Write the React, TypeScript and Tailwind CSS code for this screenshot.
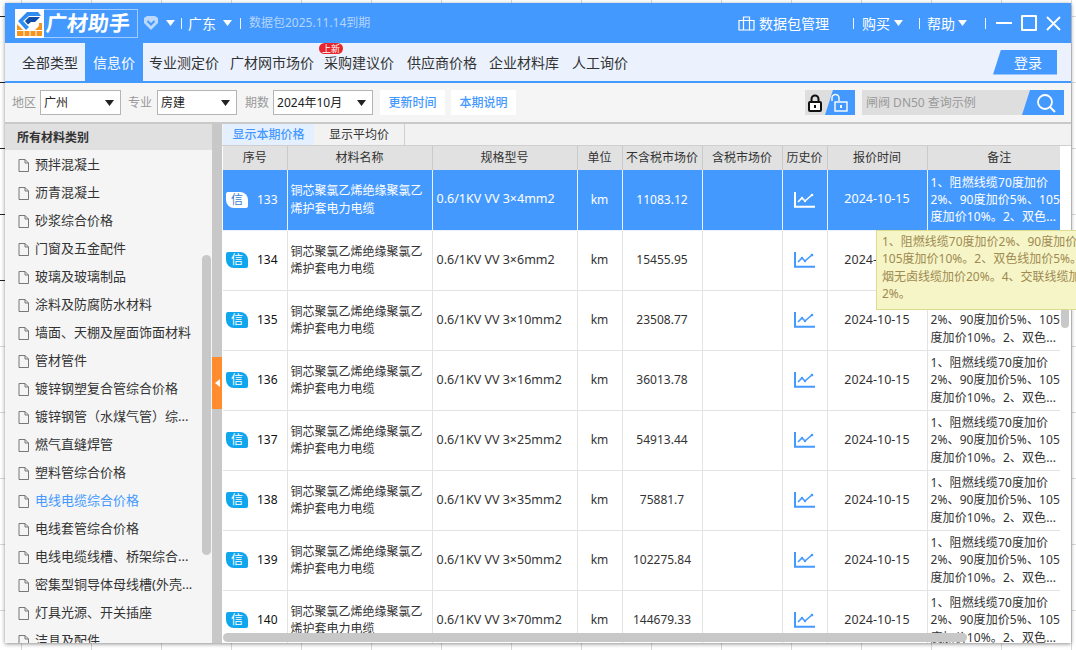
import React from "react";

const FONT = "[font-family:'Noto_Sans','Noto_Sans_CJK_SC',sans-serif]";

function Caret({ className = "text-white" }: { className?: string }) {
  return (
    <svg width="9" height="6" viewBox="0 0 9 6" className={className}>
      <path d="M0 0H9L4.5 6Z" fill="currentColor" />
    </svg>
  );
}

function Sep() {
  return <span className="block w-px h-[11px] bg-white/90" />;
}

function Logo() {
  return (
    <svg width="29" height="29" viewBox="0 0 29 29" className="bg-white shrink-0">
      <path d="M12 3H23L26 7H14L8 12L14 18L11 21L3 12Z" fill="#2f8df0" />
      <path d="M14 8H25L20 13H16L13 15.5L10 12Z" fill="#0f4fa8" />
      <path d="M2 15L9 22H19L24 17V14H27V27H2Z" fill="#f7941d" />
      <path d="M2 21.5H9M19 21.5H27M9 22V27M15 22V27M21 22V27" stroke="#fff" strokeWidth="1" />
    </svg>
  );
}

function Select({ value, w }: { value: string; w: string }) {
  return (
    <div className={`${w} shrink-0 h-[25px] bg-white border border-[#b5b5b5] flex items-center justify-between pl-[3px] pr-[6px] text-[12px] text-[#222]`}>
      <span>{value}</span>
      <Caret className="text-[#222]" />
    </div>
  );
}

function ChartIcon({ className }: { className: string }) {
  return (
    <svg width="21" height="16" viewBox="0 0 21 16" className={`${className} mx-auto block`}>
      <path d="M1 0V14.8H21" fill="none" stroke="currentColor" strokeWidth="2" />
      <path d="M4 10L8 6L11 9L15 5.5L18 3" fill="none" stroke="currentColor" strokeWidth="1.6" />
      <circle cx="8" cy="6" r="1.2" fill="currentColor" />
      <circle cx="11" cy="9" r="1.2" fill="currentColor" />
      <circle cx="18" cy="3" r="1.3" fill="currentColor" />
    </svg>
  );
}

function FileIcon() {
  return (
    <svg width="11" height="13" viewBox="0 0 11 13" className="shrink-0 text-[#777]">
      <path d="M1 .5H7L10.5 4V12.5H1Z M7 .5V4H10.5" fill="none" stroke="currentColor" strokeWidth="1" />
    </svg>
  );
}

const categories = [
  "预拌混凝土", "沥青混凝土", "砂浆综合价格", "门窗及五金配件", "玻璃及玻璃制品", "涂料及防腐防水材料",
  "墙面、天棚及屋面饰面材料", "管材管件", "镀锌钢塑复合管综合价格", "镀锌钢管（水煤气管）综...", "燃气直缝焊管", "塑料管综合价格",
  "电线电缆综合价格", "电线套管综合价格", "电线电缆线槽、桥架综合...", "密集型铜导体母线槽(外壳...", "灯具光源、开关插座", "洁具及配件",
];

const rows = [
  ["133", "0.6/1KV VV 3×4mm2", "11083.12"],
  ["134", "0.6/1KV VV 3×6mm2", "15455.95"],
  ["135", "0.6/1KV VV 3×10mm2", "23508.77"],
  ["136", "0.6/1KV VV 3×16mm2", "36013.78"],
  ["137", "0.6/1KV VV 3×25mm2", "54913.44"],
  ["138", "0.6/1KV VV 3×35mm2", "75881.7"],
  ["139", "0.6/1KV VV 3×50mm2", "102275.84"],
  ["140", "0.6/1KV VV 3×70mm2", "144679.33"],
];

const headers = ["序号", "材料名称", "规格型号", "单位", "不含税市场价", "含税市场价", "历史价", "报价时间"];
const tabs: [string, string][] = [
  ["专业测定价", "ml-0"],
  ["广材网市场价", "ml-[11px]"],
  ["采购建议价", "ml-[10px]"],
  ["供应商价格", "ml-[13px]"],
  ["企业材料库", "ml-[12px]"],
  ["人工询价", "ml-[13px]"],
];

export default function App() {
  return (
    <div className={`${FONT} w-[1076px] h-[650px] overflow-hidden relative bg-white pl-[5px] pt-[3px] bg-[linear-gradient(#d9d9d9_1px,transparent_1px),linear-gradient(90deg,#d9d9d9_1px,transparent_1px)] bg-[size:70px_66px] bg-[position:21px_16px]`}>
      <div className="w-[1066px] h-[640px] flex flex-col bg-[#f5f5f5] shadow-[0_1px_4px_rgba(0,0,0,0.45)]">
        {/* Title bar */}
        <div className="h-[40px] shrink-0 bg-[#4499ff] flex items-center text-white">
          <div className="ml-[10px] flex items-center h-[29px] w-[123px] border border-white/50 border-l-0">
            <Logo />
            <span className="ml-[2px] text-[21px] leading-none font-bold -skew-x-6">广材助手</span>
          </div>
          <svg width="16" height="16" viewBox="0 0 16 16" className="ml-[5px] text-[#bcd9fb]">
            <path d="M8 15L1 8V3L4 1H12L15 3V8Z" fill="currentColor" />
            <path d="M4.5 6L8 9.5L11.5 6" fill="none" stroke="#4499ff" strokeWidth="2" />
          </svg>
          <span className="ml-[7px] mr-[6px]"><Caret /></span>
          <Sep />
          <span className="ml-[6px] text-[14px]">广东</span>
          <span className="ml-[7px] mr-[8px]"><Caret /></span>
          <Sep />
          <span className="ml-[8px] text-[12px] text-[#b4d5fc]">数据包2025.11.14到期</span>
          <div className="flex-1" />
          <svg width="17" height="15" viewBox="0 0 17 15" className="mr-[4px]">
            <path d="M1 4.5H16V14H1ZM5.5 4.5V1H11.5V4.5M5.5 4.5V14M11.5 4.5V14" fill="none" stroke="#fff" strokeWidth="1.2" />
          </svg>
          <span className="text-[14px] mr-[24px]">数据包管理</span>
          <Sep />
          <span className="text-[14px] ml-[8px] mr-[4px]">购买</span>
          <Caret />
          <span className="ml-[16px]"><Sep /></span>
          <span className="text-[14px] ml-[7px] mr-[3px]">帮助</span>
          <Caret />
          <span className="ml-[18px]"><Sep /></span>
          <span className="ml-[10px] w-[16px] h-[2px] bg-white" />
          <span className="ml-[9px] w-[16px] h-[16px] border-2 border-white rounded-[1px]" />
          <svg width="15" height="15" viewBox="0 0 15 15" className="ml-[9px] mr-[10px]">
            <path d="M1 1L14 14M14 1L1 14" stroke="#fff" strokeWidth="1.8" />
          </svg>
        </div>

        {/* Tabs */}
        <div className="h-[40px] shrink-0 bg-[#ebf2fe] border-b-2 border-[#4499ff] flex items-stretch pl-[9px] text-[14px] text-[#333]">
          <div className="pl-[8px] w-[71px] flex items-center whitespace-nowrap">全部类型</div>
          <div className="px-[8px] flex items-center bg-[#4499ff] text-white">信息价</div>
          <div className="flex items-center pl-[6px]">
            {tabs.map(([t, m], i) => (
              <span key={t} className={`relative whitespace-nowrap ${m}`}>
                {t}
                {i === 2 && (
                  <span className="absolute -top-[9px] left-[-5px] w-[24px] h-[11px] leading-[11px] rounded-full bg-[#e8262b] text-white text-[9px] text-center">上新</span>
                )}
              </span>
            ))}
          </div>
          <div className="flex-1" />
          <div className="self-center mr-[14px] w-[64px] h-[25px] bg-[#4499ff] text-white flex items-center justify-center pl-[6px] [clip-path:polygon(8px_0,100%_0,100%_100%,0_100%)]">登录</div>
        </div>

        {/* Toolbar */}
        <div className="h-[41px] shrink-0 border-b-2 border-[#c9c9c9] flex items-center pl-[7px] text-[12px] text-[#999]">
          <span className="mr-[4px]">地区</span>
          <Select value="广州" w="w-[81px]" />
          <span className="ml-[7px] mr-[5px]">专业</span>
          <Select value="房建" w="w-[80px]" />
          <span className="ml-[8px] mr-[4px]">期数</span>
          <Select value="2024年10月" w="w-[100px]" />
          <span className="ml-[7px] w-[65px] h-[25px] bg-white text-[#4499ff] font-medium flex items-center justify-center">更新时间</span>
          <span className="ml-[6px] w-[65px] h-[25px] bg-white text-[#4499ff] font-medium flex items-center justify-center">本期说明</span>
          <div className="flex-1" />
          <div className="relative w-[50px] h-[25px] bg-[#dedede] flex items-center">
            <svg width="14" height="18" viewBox="0 0 14 18" className="ml-[3px]">
              <path d="M3.5 8V5a3.5 3.5 0 0 1 7 0v3" fill="none" stroke="#111" strokeWidth="2" />
              <rect x="1" y="8" width="12" height="9" rx="1" fill="#fff" stroke="#111" strokeWidth="2" />
              <rect x="6" y="11" width="2" height="3" fill="#111" />
            </svg>
            <div className="absolute right-0 top-0 w-[30px] h-[25px] bg-[#4499ff] [clip-path:polygon(8px_0,100%_0,100%_100%,0_100%)] flex items-center justify-end pr-[7px]">
              <svg width="17" height="19" viewBox="0 0 17 19">
                <path d="M1 8V5a3.5 3.5 0 0 1 7 0v3" fill="none" stroke="#fff" strokeWidth="1.4" />
                <rect x="4" y="9" width="12" height="9" fill="none" stroke="#fff" strokeWidth="1.4" />
                <rect x="9" y="12" width="2" height="3" fill="#fff" />
              </svg>
            </div>
          </div>
          <div className="ml-[7px] mr-[7px] relative w-[202px] h-[25px] bg-[#dedede] flex items-center pl-[4px] text-[12px] text-[#999]">
            闸阀 DN50 查询示例
            <div className="absolute right-0 top-0 w-[42px] h-[25px] bg-[#4499ff] [clip-path:polygon(8px_0,100%_0,100%_100%,0_100%)] flex items-center justify-end pr-[8px]">
              <svg width="20" height="20" viewBox="0 0 20 20">
                <circle cx="9" cy="9" r="7" fill="none" stroke="#fff" strokeWidth="1.8" />
                <path d="M14 14L19 19" stroke="#fff" strokeWidth="2" />
              </svg>
            </div>
          </div>
        </div>

        {/* Body */}
        <div className="flex-1 min-h-0 flex">
          {/* Sidebar */}
          <div className="relative w-[207px] shrink-0 flex flex-col overflow-hidden bg-[#f5f5f5]">
            <div className="h-[26px] shrink-0 bg-[#e0e0e0] flex items-center pl-[12px] pt-[2px] text-[12px] font-bold text-[#333]">所有材料类别</div>
            <div className="flex-1 overflow-hidden pt-px">
              {categories.map((c, i) => (
                <div key={c} className={`h-[28px] flex items-center pl-[13px] gap-[6px] text-[13px] whitespace-nowrap ${i === 12 ? "text-[#4499ff]" : "text-[#333]"}`}>
                  <FileIcon />
                  {c}
                </div>
              ))}
            </div>
            <div className="absolute right-[1px] top-[131px] w-[9px] h-[300px] rounded-full bg-[#c8c8c8]" />
          </div>

          {/* Splitter */}
          <div className="w-[10px] shrink-0 bg-[#c8c8c8] flex items-center">
            <div className="w-full h-[52px] bg-[#ff8c2e] flex items-center justify-center mb-[2px]">
              <svg width="5" height="8" viewBox="0 0 5 8"><path d="M5 0V8L0 4Z" fill="#fff" /></svg>
            </div>
          </div>

          {/* Main */}
          <div className="relative flex-1 min-w-0 flex flex-col bg-white pl-px">
            <div className="h-[22px] shrink-0 bg-[#f2f2f2] border-b border-[#cfcfcf] flex text-[12px] -ml-px pl-px">
              <div className="w-[91px] bg-[#e4f0ff] text-[#4499ff] font-medium flex items-center justify-center">显示本期价格</div>
              <div className="w-[91px] border-r border-[#cfcfcf] text-[#333] flex items-center justify-center">显示平均价</div>
            </div>
            <div className="w-[837px] flex-1 min-h-0 overflow-hidden">
              <table className="table-fixed w-[854px] border-collapse text-[12px] text-[#333]">
                <colgroup>
                  <col className="w-[64px]" />
                  <col className="w-[145px]" />
                  <col className="w-[145px]" />
                  <col className="w-[45px]" />
                  <col className="w-[80px]" />
                  <col className="w-[80px]" />
                  <col className="w-[45px]" />
                  <col className="w-[100px]" />
                  <col className="w-[150px]" />
                </colgroup>
                <thead>
                  <tr className="h-[24px] bg-[#e1e1e1]">
                    {headers.map((h) => (
                      <th key={h} className="font-normal border-r border-[#cacaca] p-0 whitespace-nowrap">{h}</th>
                    ))}
                    <th className="font-normal p-0 pr-[6px]">备注</th>
                  </tr>
                </thead>
                <tbody>
                  {rows.map((r, i) => {
                    const sel = i === 0;
                    const cell = `p-0 border-r border-b ${sel ? "border-[#e9f2ff]" : "border-[#e3e3e3]"}`;
                    return (
                      <tr key={r[0]} className={`h-[60px] ${sel ? "bg-[#4499ff] text-white" : "text-[#333]"}`}>
                        <td className={cell}>
                          <div className="flex items-center pl-[3px]">
                            <span className={`w-[22px] h-[16px] leading-[16px] text-center text-[12px] rounded-tr-[8px] rounded-bl-[8px] rounded-tl-[2px] rounded-br-[2px] ${sel ? "bg-white text-[#3a7fd0]" : "bg-[#10a6ee] text-white"}`}>信</span>
                            <span className={`ml-[9px] ${sel ? "text-white" : "text-[#111]"}`}>{r[0]}</span>
                          </div>
                        </td>
                        <td className={`${cell} pl-[3px] leading-[17.5px]`}>铜芯聚氯乙烯绝缘聚氯乙<br />烯护套电力电缆</td>
                        <td className={`${cell} pl-[4px] whitespace-nowrap text-[12.5px]`}>{r[1]}</td>
                        <td className={`${cell} text-center`}>km</td>
                        <td className={`${cell} text-center`}>{r[2]}</td>
                        <td className={cell}></td>
                        <td className={cell}><ChartIcon className={sel ? "text-white" : "text-[#4499ff]"} /></td>
                        <td className={`${cell} text-center text-[12.5px]`}>2024-10-15</td>
                        <td className={`${cell} pl-[3px] leading-[17.3px] whitespace-nowrap tracking-[0.1px]`}>
                          1、阻燃线缆70度加价<br />2%、90度加价5%、105<br />度加价10%。2、双色...
                        </td>
                      </tr>
                    );
                  })}
                </tbody>
              </table>
            </div>

            {/* Vertical scrollbar */}
            <div className="absolute right-[2px] top-[110px] w-[8px] h-[94px] rounded-full bg-[#c8c8c8]" />
            {/* Horizontal scrollbar */}
            <div className="absolute left-[1px] bottom-[1px] w-[744px] h-[9px] rounded-full bg-[#c8c8c8]" />
            {/* Tooltip */}
            <div className="absolute left-[654px] top-[106px] w-[300px] h-[80px] bg-[#f5f5c8] border border-[#dcdc8e] pl-[5px] pt-[2px] text-[12px] leading-[17.3px] text-[#a08a50] whitespace-nowrap">
              1、阻燃线缆70度加价2%、90度加价5%、<br />105度加价10%。2、双色线加价5%。3、低<br />烟无卤线缆加价20%。4、交联线缆加价<br />2%。
            </div>
          </div>
        </div>
      </div>
      <div className="absolute left-0 top-[16px] w-[5px] h-[330px] bg-[repeating-linear-gradient(#222_0,#222_1px,transparent_1px,transparent_66px)]" />
    </div>
  );
}
